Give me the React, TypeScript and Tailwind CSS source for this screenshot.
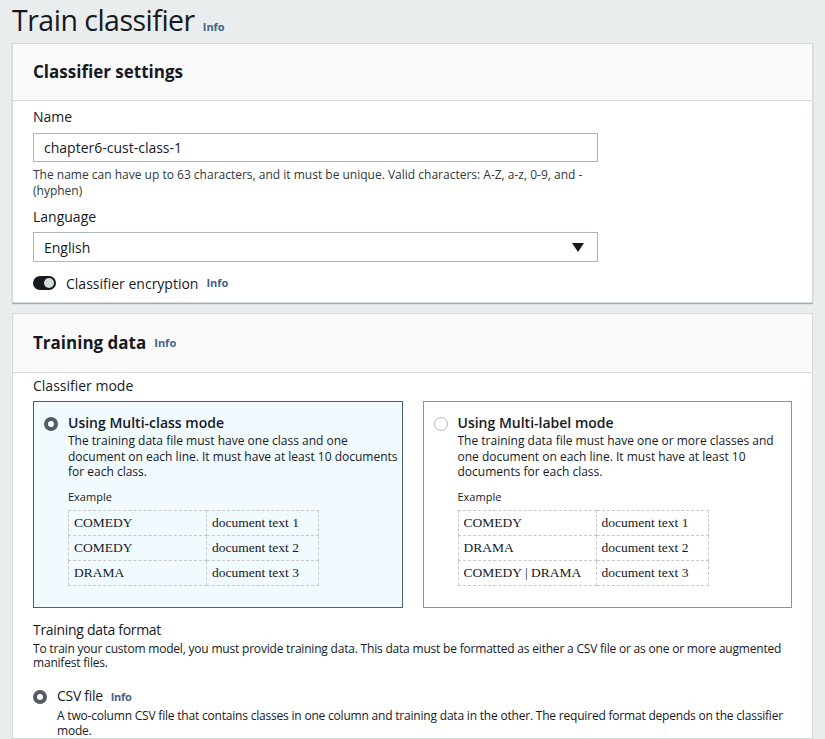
const sans = "font-['Open_Sans',_'Noto_Sans',_sans-serif]"

function Info() {
  return <span className="ml-2 text-[11px] font-bold text-[#3f6385]">Info</span>
}

function Radio({ checked }: { checked: boolean }) {
  return checked ? (
    <span className="flex h-[14px] w-[14px] shrink-0 items-center justify-center rounded-full bg-[#545b64]">
      <span className="block h-[6px] w-[6px] rounded-full bg-white" />
    </span>
  ) : (
    <span className="block h-[14px] w-[14px] shrink-0 rounded-full border border-[#aab7b8] bg-white" />
  )
}

function ExampleTable({ rows }: { rows: [string, string][] }) {
  return (
    <table className="mt-[5px] border-collapse font-['Liberation_Serif',_serif] text-[13.5px] text-[#16191f]">
      <tbody>
        {rows.map(([a, b], i) => (
          <tr key={i} className="h-[25px]">
            <td className="w-[138px] border border-dashed border-[#c8c8c8] px-[5px] whitespace-nowrap">{a}</td>
            <td className="w-[112px] border border-dashed border-[#c8c8c8] px-[5px] whitespace-nowrap">{b}</td>
          </tr>
        ))}
      </tbody>
    </table>
  )
}

function ModeCard({
  checked,
  title,
  desc,
  rows,
}: {
  checked: boolean
  title: string
  desc: string
  rows: [string, string][]
}) {
  return (
    <div
      className={
        checked
          ? "h-[207px] w-[370px] border border-[#47607a] bg-[#f1faff] pl-[10px] pt-[12px]"
          : "h-[207px] w-[370px] border border-[#879596] bg-white pl-[10px] pt-[12px]"
      }
    >
      <div className="flex gap-[10px]">
        <div className="pt-[3px]">
          <Radio checked={checked} />
        </div>
        <div className="w-[332px]">
          <div className="text-[14px] font-semibold leading-[18px] text-[#16191f]">{title}</div>
          <div className="mt-[1px] text-[12px] leading-[15.5px] text-[#16191f]">{desc}</div>
          <div className="mt-[9px] text-[11px] text-[#16191f]">Example</div>
          <ExampleTable rows={rows} />
        </div>
      </div>
    </div>
  )
}

export default function App() {
  return (
    <main className={`h-[739px] w-[825px] overflow-hidden bg-[#eaeded] pl-[12px] pr-[12px] ${sans}`}>
      <div className="flex h-[43px] items-baseline pt-[1px]">
        <h1 className="text-[28.5px] leading-[38px] tracking-[-0.5px] text-[#16191f]">Train classifier</h1>
        <Info />
      </div>

      {/* Classifier settings */}
      <section className="border border-[#d5dbdb] bg-white shadow-[0_1px_1px_rgba(0,28,36,0.3)]">
        <div className="flex h-[57px] items-center border-b border-[#d5dbdb] bg-[#fafafa] px-[20px]">
          <h2 className="text-[17px] font-bold text-[#16191f]">Classifier settings</h2>
        </div>
        <div className="px-[20px] pb-[9px] pt-[6px]">
          <label className="block text-[14px] leading-[20px] text-[#16191f]">Name</label>
          <div className="mt-[6px] flex h-[29px] w-[565px] items-center border border-[#aab7b8] px-[10px] text-[14px] text-[#16191f]">
            chapter6-cust-class-1
          </div>
          <p className="mt-[5px] w-[565px] text-[12px] leading-[16px] text-[#2f3740]">
            The name can have up to 63 characters, and it must be unique. Valid characters: A-Z, a-z, 0-9, and - (hyphen)
          </p>
          <label className="mt-[8px] block text-[14px] leading-[20px] text-[#16191f]">Language</label>
          <div className="mt-[5px] flex h-[30px] w-[565px] items-center justify-between border border-[#aab7b8] px-[10px] text-[14px] text-[#16191f]">
            English
            <svg width="12" height="9" viewBox="0 0 12 9" className="mr-[3px]">
              <path d="M0 0 L12 0 L6 9 Z" fill="#16191f" />
            </svg>
          </div>
          <div className="mt-[11px] flex h-[20px] items-center">
            <span className="relative block h-[14px] w-[23px] rounded-full bg-[#16191f]">
              <span className="absolute right-[2px] top-[2px] block h-[10px] w-[10px] rounded-full bg-[#d5dbdb]" />
            </span>
            <span className="ml-[10px] text-[14px] font-medium text-[#16191f]">Classifier encryption</span>
            <Info />
          </div>
        </div>
      </section>

      {/* Training data */}
      <section className="mt-[10px] border border-[#d5dbdb] bg-white">
        <div className="flex h-[59px] items-center border-b border-[#d5dbdb] bg-[#fafafa] px-[20px]">
          <h2 className="text-[17px] font-bold text-[#16191f]">Training data</h2>
          <Info />
        </div>
        <div className="px-[20px] pt-[3px]">
          <div className="text-[14px] leading-[20px] text-[#16191f]">Classifier mode</div>
          <div className="mt-[5px] flex gap-[20px]">
            <ModeCard
              checked
              title="Using Multi-class mode"
              desc="The training data file must have one class and one document on each line. It must have at least 10 documents for each class."
              rows={[
                ["COMEDY", "document text 1"],
                ["COMEDY", "document text 2"],
                ["DRAMA", "document text 3"],
              ]}
            />
            <ModeCard
              checked={false}
              title="Using Multi-label mode"
              desc="The training data file must have one or more classes and one document on each line. It must have at least 10 documents for each class."
              rows={[
                ["COMEDY", "document text 1"],
                ["DRAMA", "document text 2"],
                ["COMEDY | DRAMA", "document text 3"],
              ]}
            />
          </div>
          <div className="mt-[12px] text-[14px] leading-[20px] tracking-[-0.3px] text-[#16191f]">Training data format</div>
          <p className="mt-[2px] w-[765px] text-[12px] leading-[14px] tracking-[-0.2px] text-[#16191f]">
            To train your custom model, you must provide training data. This data must be formatted as either a CSV file or as one or more augmented manifest files.
          </p>
          <div className="mt-[17px] flex gap-[10px]">
            <div className="pt-[3px]">
              <Radio checked />
            </div>
            <div className="w-[740px]">
              <div className="flex items-baseline text-[14px] leading-[18px] tracking-[-0.3px] text-[#16191f]">
                CSV file
                <Info />
              </div>
              <p className="mt-[2px] text-[12px] leading-[15px] tracking-[-0.2px] text-[#16191f]">
                A two-column CSV file that contains classes in one column and training data in the other. The required format depends on the classifier mode.
              </p>
            </div>
          </div>
        </div>
      </section>
    </main>
  )
}
